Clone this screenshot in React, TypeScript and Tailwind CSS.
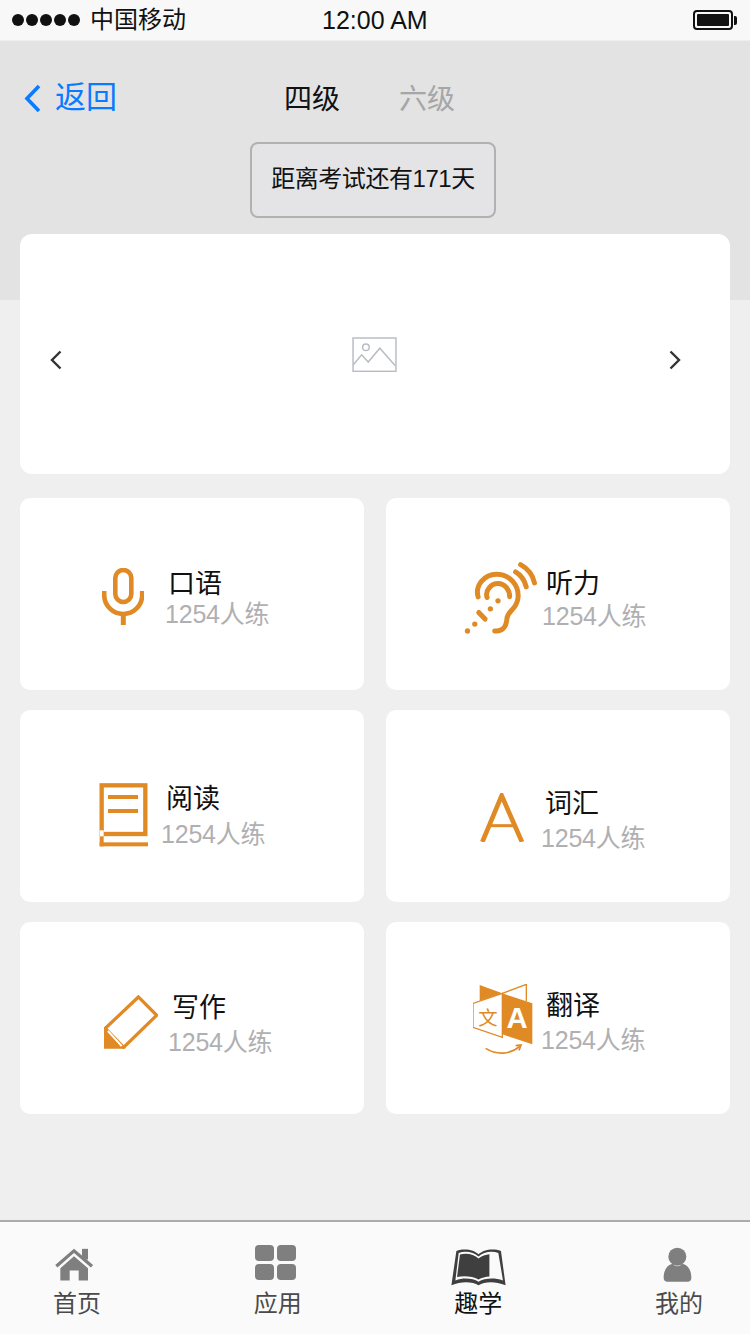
import React from "react";

const O = "#e08a25";
const G = "#7f7f7f";

const MicIcon = () => (
  <svg width="42" height="57" viewBox="0 0 42 57" fill="none" stroke={O}>
    <rect x="13.3" y="2" width="16" height="32" rx="8" strokeWidth="4.6" />
    <path d="M2.2 23v4a19 19 0 0 0 38 0v-4" strokeWidth="4.6" />
    <path d="M21.3 46v11" strokeWidth="5" />
  </svg>
);

const EarIcon = () => (
  <svg width="75" height="73" viewBox="40 35 225 220" fill="none" stroke={O} strokeWidth="15" strokeLinecap="round">
    <path d="M85 140C75 105 105 72 140 72C180 72 210 105 205 145C200 180 175 180 172 205C170 235 155 245 135 243" />
    <path d="M112 142C105 120 125 100 145 100C165 100 180 118 180 140" />
    <path d="M198 65C215 75 225 90 230 110" />
    <path d="M213 43C235 55 250 75 255 98" />
    <path d="M87 187L106 207" />
    <g fill={O} stroke="none">
      <circle cx="145" cy="152" r="8" />
      <circle cx="122" cy="176" r="8" />
      <circle cx="75" cy="222" r="8" />
      <circle cx="53" cy="243" r="8" />
    </g>
  </svg>
);

const BookIcon = () => (
  <svg width="50" height="64" viewBox="58 38 150 192" fill="none">
    <rect x="66" y="45" width="131" height="146" stroke={O} strokeWidth="13" />
    <path d="M85 80H175M85 122H175" stroke={O} strokeWidth="12" />
    <rect x="60" y="216" width="145" height="12" fill={O} />
    <rect x="60" y="195" width="12" height="33" fill={O} />
    <rect x="60" y="180" width="12" height="18" fill="#ffffff" />
  </svg>
);

const AIcon = () => (
  <svg width="44" height="49" viewBox="90 68 132 147" fill="none" stroke={O}>
    <path d="M97 215L155 76L216 215" strokeWidth="14" />
    <path d="M115 166H197" strokeWidth="9" />
  </svg>
);

const PencilIcon = () => (
  <svg width="54" height="54" viewBox="70 58 165 165" fill="none">
    <path d="M175 64L231 120L130 218L74 160Z" stroke={O} strokeWidth="10" />
    <path d="M70 160L130 222H70Z" fill={O} />
    <path d="M82 168L124 214" stroke="#ffffff" strokeWidth="6" />
    <path d="M80 174L112 208" stroke={O} strokeWidth="3" />
  </svg>
);

const TranslateIcon = () => (
  <svg width="60" height="72" viewBox="40 27 180 216" fill="none">
    <path d="M60 30L128 55L60 78Z" fill={O} />
    <path d="M128 55L200 28V78" stroke={O} strokeWidth="4" />
    <path d="M40 85L128 55V187L40 157Z" fill="#ffffff" stroke={O} strokeWidth="4" />
    <path d="M128 55L218 85V208L128 178Z" fill={O} />
    <text x="172" y="158" textAnchor="middle" fill="#ffffff" fontSize="88" fontWeight="700" fontFamily="Liberation Sans, sans-serif">A</text>
    <text x="85" y="150" textAnchor="middle" fill={O} fontSize="58" fontFamily="Noto Sans CJK SC, sans-serif">文</text>
    <path d="M78 220C110 240 150 240 180 214" stroke={O} strokeWidth="5" />
    <path d="M168 212L184 210L178 226" stroke={O} strokeWidth="5" />
  </svg>
);

const HomeIcon = () => (
  <svg width="40" height="33" viewBox="163 98 120 98" fill="none">
    <rect x="247" y="100" width="18" height="32" fill={G} />
    <path d="M170 152L223 106L277 152" stroke={G} strokeWidth="10" />
    <path d="M223 122L265 158V195H237V165H210V195H182V158Z" fill={G} />
  </svg>
);

const GridIcon = () => (
  <svg width="42" height="36" viewBox="0 0 42 36" fill={G}>
    <rect x="0" y="0" width="19" height="16" rx="4" />
    <rect x="22" y="0" width="19" height="16" rx="4" />
    <rect x="0" y="19" width="19" height="16" rx="4" />
    <rect x="22" y="19" width="19" height="16" rx="4" />
  </svg>
);

const OpenBookIcon = () => (
  <svg width="55" height="38" viewBox="229 98 166 115">
    <path d="M230 211L245 107C270 97 300 104 312 117C325 104 355 97 380 107L394 211C360 197 330 200 312 211C295 200 262 197 230 211Z" fill="#3f3f3f" />
    <path d="M242 196L252 113C272 106 298 110 312 124C326 110 352 106 372 113L386 196C358 187 330 190 312 200C295 190 268 187 242 196Z" fill="#fafafa" />
    <path d="M247 186L256 118C274 112 298 116 312 130C322 122 334 118 345 117V184C333 185 322 188 312 193C295 184 268 181 247 186Z" fill="#3f3f3f" />
  </svg>
);

const PersonIcon = () => (
  <svg width="29" height="36" viewBox="863 95 87 104" fill={G}>
    <circle cx="906" cy="122" r="27" />
    <path d="M865 185C865 162 875 147 892 143C900 153 912 153 921 143C938 147 948 162 948 185Q948 197 936 197H877Q865 197 865 185Z" />
  </svg>
);

const ImageIcon = () => (
  <svg width="45" height="35" viewBox="66 46 136 106" fill="none" stroke="#b9bdc3" strokeWidth="4.5">
    <rect x="69" y="49" width="130" height="101" />
    <circle cx="108" cy="77" r="10" />
    <path d="M70 130L95 100L115 122L150 80L197 133" />
  </svg>
);

const cards = [
  { title: "口语", Icon: MicIcon, box: "pl-[82px]", icon: "mt-[70px]", col: "ml-[21px] mt-[68px]", t: "pl-[3px]", s: "mt-0" },
  { title: "听力", Icon: EarIcon, box: "pl-[77px]", icon: "mt-[64px]", col: "ml-[4px] mt-[68px]", t: "pl-[4px]", s: "mt-[2px]" },
  { title: "阅读", Icon: BookIcon, box: "pl-[79px]", icon: "mt-[73px]", col: "ml-[12px] mt-[71px]", t: "pl-[5px]", s: "mt-[5px]" },
  { title: "词汇", Icon: AIcon, box: "pl-[94px]", icon: "mt-[83px]", col: "ml-[17px] mt-[76px]", t: "pl-[4px]", s: "mt-[4px]" },
  { title: "写作", Icon: PencilIcon, box: "pl-[84px]", icon: "mt-[73px]", col: "ml-[10px] mt-[68px]", t: "pl-[4px]", s: "mt-[4px]" },
  { title: "翻译", Icon: TranslateIcon, box: "pl-[87px]", icon: "mt-[62px]", col: "ml-[8px] mt-[66px]", t: "pl-[5px]", s: "mt-[4px]" },
];

const tabs = [
  { label: "首页", Icon: HomeIcon, cls: "text-[#4a4a4a]", h: "mt-[4px] mr-[6px]" },
  { label: "应用", Icon: GridIcon, cls: "text-[#4a4a4a]", h: "mt-px mr-[3px]" },
  { label: "趣学", Icon: OpenBookIcon, cls: "text-[#111111]", h: "mt-[4px]" },
  { label: "我的", Icon: PersonIcon, cls: "text-[#4a4a4a]", h: "mt-[3px] mr-[2px]" },
];

export default function App() {
  return (
    <div className="w-[750px] h-[1334px] flex flex-col overflow-hidden bg-[#efefef] [font-family:'Liberation_Sans','Noto_Sans_CJK_SC',sans-serif]">
      <div className="h-[41px] shrink-0 bg-[#f8f8f8] border-b border-[#eeeeee] flex items-center pl-[12px] pr-[13px] text-[24px] leading-[40px] text-[#111111] relative">
        <div className="flex gap-[2px]">
          {[0, 1, 2, 3, 4].map((i) => (
            <span key={i} className="w-[12px] h-[12px] rounded-full bg-[#111111]" />
          ))}
        </div>
        <span className="ml-[10px]">中国移动</span>
        <span className="ml-[136px] text-[25px]">12:00 AM</span>
        <div className="ml-auto flex items-center">
          <div className="w-[40px] h-[20px] rounded-[4px] border-2 border-[#111111] p-[2px]">
            <div className="w-full h-full bg-[#111111] rounded-[1px]" />
          </div>
          <div className="w-[3px] h-[9px] bg-[#111111] rounded-r-[2px] ml-px" />
        </div>
      </div>

      <div className="h-[259px] shrink-0 bg-[#e3e3e3]">
        <div className="flex items-center h-[40px] mt-[37px] pl-[24px]">
          <svg width="17" height="28" viewBox="0 0 17 28" fill="none" stroke="#0a7aff" strokeWidth="3.6">
            <path d="M15 2L3 14.5L15 27" />
          </svg>
          <span className="ml-[14px] text-[31px] leading-[40px] text-[#0a7aff] w-[62px] -mt-px">返回</span>
          <span className="ml-[167px] text-[28px] leading-[40px] text-[#111111] mt-[3px]">四级</span>
          <span className="ml-[59px] text-[28px] leading-[40px] text-[#a6a6a6] mt-[3px]">六级</span>
        </div>
        <div className="mt-[24px] ml-[250px] w-[246px] h-[76px] rounded-[8px] border-2 border-[#b1b1b1] bg-[#e4e3e6] flex items-center justify-center pb-[3px] text-[24px] tracking-[-0.45px] text-[#111111]">
          距离考试还有171天
        </div>
      </div>

      <div className="flex-1 px-[20px]">
        <div className="-mt-[66px] h-[240px] bg-white rounded-[12px] flex items-center pl-[30px]">
          <svg width="12" height="20" viewBox="0 0 12 20" fill="none" stroke="#333333" strokeWidth="2.4" className="mt-[12px]">
            <path d="M10.5 1.5L2 10L10.5 18.5" />
          </svg>
          <div className="ml-[290px]">
            <ImageIcon />
          </div>
          <svg width="12" height="20" viewBox="0 0 12 20" fill="none" stroke="#333333" strokeWidth="2.4" className="ml-[272px] mt-[12px]">
            <path d="M1.5 1.5L10 10L1.5 18.5" />
          </svg>
        </div>

        <div className="mt-[24px] grid grid-cols-[344px_344px] gap-x-[22px] gap-y-[20px]">
          {cards.map(({ title, Icon, box, icon, col, t, s }) => (
            <div key={title} className={`h-[192px] bg-white rounded-[10px] flex items-start ${box}`}>
              <div className={`shrink-0 ${icon}`}>
                <Icon />
              </div>
              <div className={col}>
                <div className={`text-[27px] leading-[32px] pt-[2px] -mb-[2px] h-[34px] text-[#111111] ${t}`}>{title}</div>
                <div className={`text-[25px] leading-[32px] tracking-[-0.2px] text-[#b0b0b2] ${s}`}>1254人练</div>
              </div>
            </div>
          ))}
        </div>
      </div>

      <div className="h-[114px] shrink-0 bg-[#fafafa] border-t-2 border-[#ababab] flex justify-between pl-[47px] pr-[41px]">
        {tabs.map(({ label, Icon, cls, h }) => (
          <div key={label} className="w-[60px] flex flex-col items-center">
            <div className="h-[40px] mt-[22px]">
              <div className={h}>
                <Icon />
              </div>
            </div>
            <span className={`text-[24px] leading-[30px] mt-[5px] ${cls}`}>{label}</span>
          </div>
        ))}
      </div>
    </div>
  );
}
